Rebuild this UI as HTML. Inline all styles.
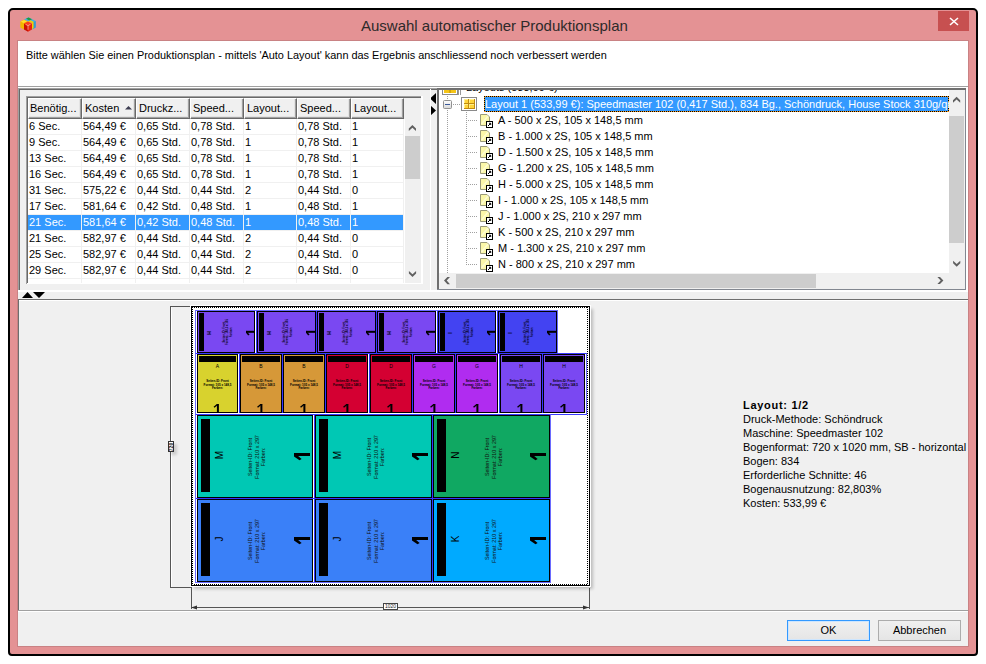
<!DOCTYPE html><html><head><meta charset="utf-8"><style>
*{box-sizing:border-box;margin:0;padding:0}
html,body{width:986px;height:664px;overflow:hidden;background:#fff;position:relative;font-family:"Liberation Sans",sans-serif}
.a{position:absolute}
.t{position:absolute;white-space:nowrap;font-size:11px;line-height:16px;color:#000}
.hc{position:absolute;top:98px;height:21px;background:#F0F0F0;border-top:1px solid #fff;border-left:1px solid #fff;border-right:1px solid #696969;border-bottom:1px solid #696969;box-shadow:inset -1px -1px 0 #A0A0A0,inset -2px -2px 0 #E3E3E3;font-size:11px;line-height:18px;padding-left:2px;white-space:nowrap;overflow:hidden;color:#000}
.chev{position:absolute}
</style></head><body>

<div class="a" style="left:8px;top:8px;width:970px;height:648px;background:#E49294;border:2px solid #000;border-radius:5px 5px 4px 4px"></div>
<div class="a" style="left:17px;top:40px;width:952px;height:607px;border:1px solid #C98284"></div>
<div class="t" style="left:361px;top:16px;font-size:15px;line-height:20px;color:#2E2A2A">Auswahl automatischer Produktionsplan</div>
<div class="a" style="left:938px;top:11px;width:31px;height:20px;background:#C75050"></div>
<svg class="a" style="left:938px;top:11px" width="31" height="20"><path d="M12 7 L20 14 M20 7 L12 14" stroke="#fff" stroke-width="1.6"/></svg>
<svg class="a" style="left:20px;top:17px" width="16" height="15" viewBox="0 0 16 15">
<path d="M0.3 4.5L4 2.5L8 4.5L8 8L4 12.5L0.3 10.5Z" fill="#F2B800"/>
<path d="M0.8 4.6L4 2.9L7 4.4L3.6 6Z" fill="#FFE030"/>
<path d="M4 2.5L8.5 0.3L15.7 4L15.7 10.5L12 12.5L12 6Z" fill="#48AEE0"/>
<path d="M15.7 4L15.7 10.5L13 12L13 5.5Z" fill="#3A98D0"/>
<path d="M6 1.8L8.5 0.5L12 2.3L9.5 3.6Z" fill="#1E9A3C"/>
<path d="M8 4.5L10.5 3.2L13.5 4.8L13.5 11.2L12 12L12 6Z" fill="#F8CC00"/>
<path d="M4 6.5L8 8.5L8 14.7L4 12.5Z" fill="#CC1000"/>
<path d="M8 8.5L12 6.5L12 12.5L8 14.7Z" fill="#E82410"/>
<path d="M4 6.5L8 4.6L12 6.5L8 8.5Z" fill="#FF3A1A"/>
<path d="M8 8.6V12.8M8 8.6L5.6 7.4M8 8.6L10.4 7.4" stroke="#FFC0A8" stroke-width="0.7" fill="none"/>
</svg>
<div class="a" style="left:18px;top:41px;width:950px;height:605px;background:#F0F0F0"></div>
<div class="a" style="left:18px;top:41px;width:950px;height:45px;background:#fff"></div>
<div class="t" style="left:26px;top:49px;font-size:11px;line-height:12px;transform:scaleX(0.9915);transform-origin:0 0">Bitte wählen Sie einen Produktionsplan - mittels 'Auto Layout' kann das Ergebnis anschliessend noch verbessert werden</div>
<div class="a" style="left:18px;top:86px;width:950px;height:1px;background:#A0A0A0"></div>
<div class="a" style="left:18px;top:87px;width:950px;height:1px;background:#fff"></div>
<div class="a" style="left:18px;top:88px;width:949px;height:1px;background:#A0A0A0"></div>
<div class="a" style="left:18px;top:89px;width:948px;height:1px;background:#696969"></div>
<div class="a" style="left:18px;top:88px;width:1px;height:203px;background:#A0A0A0"></div>
<div class="a" style="left:19px;top:89px;width:1px;height:201px;background:#696969"></div>
<div class="a" style="left:18px;top:290px;width:950px;height:2px;background:#fff"></div>
<div class="a" style="left:966px;top:88px;width:2px;height:204px;background:#fff"></div>
<div class="a" style="left:26px;top:96px;width:397px;height:188px;background:#fff"></div>
<div class="a" style="left:26px;top:96px;width:397px;height:1px;background:#A0A0A0"></div>
<div class="a" style="left:26px;top:97px;width:396px;height:1px;background:#696969"></div>
<div class="a" style="left:26px;top:96px;width:1px;height:188px;background:#A0A0A0"></div>
<div class="a" style="left:27px;top:97px;width:1px;height:186px;background:#696969"></div>
<div class="a" style="left:28px;top:98px;width:393px;height:21px;background:#F0F0F0"></div>
<div class="hc" style="left:28px;width:54px;padding-left:1px">Benötig...</div>
<div class="hc" style="left:82px;width:54px;">Kosten</div>
<div class="hc" style="left:136px;width:54px;">Druckz...</div>
<div class="hc" style="left:190px;width:54px;">Speed...</div>
<div class="hc" style="left:244px;width:53px;">Layout...</div>
<div class="hc" style="left:297px;width:54px;">Speed...</div>
<div class="hc" style="left:351px;width:53px;">Layout...</div>
<svg class="a" style="left:124px;top:105px" width="9" height="6"><path d="M1 4.5 L4.5 1 L8 4.5Z" fill="#3C3C50"/></svg>
<div class="a" style="left:28px;top:119px;width:376px;height:164px;overflow:hidden">
<div class="a" style="left:0px;top:15px;width:376px;height:1px;background:#F0F0F0"></div>
<div class="t" style="left:1px;top:-1px;color:#000">6 Sec.</div>
<div class="t" style="left:55px;top:-1px;color:#000">564,49 €</div>
<div class="t" style="left:109px;top:-1px;color:#000">0,65 Std.</div>
<div class="t" style="left:163px;top:-1px;color:#000">0,78 Std.</div>
<div class="t" style="left:217px;top:-1px;color:#000">1</div>
<div class="t" style="left:270px;top:-1px;color:#000">0,78 Std.</div>
<div class="t" style="left:324px;top:-1px;color:#000">1</div>
<div class="a" style="left:0px;top:31px;width:376px;height:1px;background:#F0F0F0"></div>
<div class="t" style="left:1px;top:15px;color:#000">9 Sec.</div>
<div class="t" style="left:55px;top:15px;color:#000">564,49 €</div>
<div class="t" style="left:109px;top:15px;color:#000">0,65 Std.</div>
<div class="t" style="left:163px;top:15px;color:#000">0,78 Std.</div>
<div class="t" style="left:217px;top:15px;color:#000">1</div>
<div class="t" style="left:270px;top:15px;color:#000">0,78 Std.</div>
<div class="t" style="left:324px;top:15px;color:#000">1</div>
<div class="a" style="left:0px;top:47px;width:376px;height:1px;background:#F0F0F0"></div>
<div class="t" style="left:1px;top:31px;color:#000">13 Sec.</div>
<div class="t" style="left:55px;top:31px;color:#000">564,49 €</div>
<div class="t" style="left:109px;top:31px;color:#000">0,65 Std.</div>
<div class="t" style="left:163px;top:31px;color:#000">0,78 Std.</div>
<div class="t" style="left:217px;top:31px;color:#000">1</div>
<div class="t" style="left:270px;top:31px;color:#000">0,78 Std.</div>
<div class="t" style="left:324px;top:31px;color:#000">1</div>
<div class="a" style="left:0px;top:63px;width:376px;height:1px;background:#F0F0F0"></div>
<div class="t" style="left:1px;top:47px;color:#000">16 Sec.</div>
<div class="t" style="left:55px;top:47px;color:#000">564,49 €</div>
<div class="t" style="left:109px;top:47px;color:#000">0,65 Std.</div>
<div class="t" style="left:163px;top:47px;color:#000">0,78 Std.</div>
<div class="t" style="left:217px;top:47px;color:#000">1</div>
<div class="t" style="left:270px;top:47px;color:#000">0,78 Std.</div>
<div class="t" style="left:324px;top:47px;color:#000">1</div>
<div class="a" style="left:0px;top:79px;width:376px;height:1px;background:#F0F0F0"></div>
<div class="t" style="left:1px;top:63px;color:#000">31 Sec.</div>
<div class="t" style="left:55px;top:63px;color:#000">575,22 €</div>
<div class="t" style="left:109px;top:63px;color:#000">0,44 Std.</div>
<div class="t" style="left:163px;top:63px;color:#000">0,44 Std.</div>
<div class="t" style="left:217px;top:63px;color:#000">2</div>
<div class="t" style="left:270px;top:63px;color:#000">0,44 Std.</div>
<div class="t" style="left:324px;top:63px;color:#000">0</div>
<div class="a" style="left:0px;top:95px;width:376px;height:1px;background:#F0F0F0"></div>
<div class="t" style="left:1px;top:79px;color:#000">17 Sec.</div>
<div class="t" style="left:55px;top:79px;color:#000">581,64 €</div>
<div class="t" style="left:109px;top:79px;color:#000">0,42 Std.</div>
<div class="t" style="left:163px;top:79px;color:#000">0,48 Std.</div>
<div class="t" style="left:217px;top:79px;color:#000">1</div>
<div class="t" style="left:270px;top:79px;color:#000">0,48 Std.</div>
<div class="t" style="left:324px;top:79px;color:#000">1</div>
<div class="a" style="left:0px;top:96px;width:376px;height:15px;background:#3399FF"></div>
<div class="a" style="left:0px;top:111px;width:376px;height:1px;background:#F0F0F0"></div>
<div class="t" style="left:1px;top:95px;color:#fff">21 Sec.</div>
<div class="t" style="left:55px;top:95px;color:#fff">581,64 €</div>
<div class="t" style="left:109px;top:95px;color:#fff">0,42 Std.</div>
<div class="t" style="left:163px;top:95px;color:#fff">0,48 Std.</div>
<div class="t" style="left:217px;top:95px;color:#fff">1</div>
<div class="t" style="left:270px;top:95px;color:#fff">0,48 Std.</div>
<div class="t" style="left:324px;top:95px;color:#fff">1</div>
<div class="a" style="left:0px;top:127px;width:376px;height:1px;background:#F0F0F0"></div>
<div class="t" style="left:1px;top:111px;color:#000">21 Sec.</div>
<div class="t" style="left:55px;top:111px;color:#000">582,97 €</div>
<div class="t" style="left:109px;top:111px;color:#000">0,44 Std.</div>
<div class="t" style="left:163px;top:111px;color:#000">0,44 Std.</div>
<div class="t" style="left:217px;top:111px;color:#000">2</div>
<div class="t" style="left:270px;top:111px;color:#000">0,44 Std.</div>
<div class="t" style="left:324px;top:111px;color:#000">0</div>
<div class="a" style="left:0px;top:143px;width:376px;height:1px;background:#F0F0F0"></div>
<div class="t" style="left:1px;top:127px;color:#000">25 Sec.</div>
<div class="t" style="left:55px;top:127px;color:#000">582,97 €</div>
<div class="t" style="left:109px;top:127px;color:#000">0,44 Std.</div>
<div class="t" style="left:163px;top:127px;color:#000">0,44 Std.</div>
<div class="t" style="left:217px;top:127px;color:#000">2</div>
<div class="t" style="left:270px;top:127px;color:#000">0,44 Std.</div>
<div class="t" style="left:324px;top:127px;color:#000">0</div>
<div class="a" style="left:0px;top:159px;width:376px;height:1px;background:#F0F0F0"></div>
<div class="t" style="left:1px;top:143px;color:#000">29 Sec.</div>
<div class="t" style="left:55px;top:143px;color:#000">582,97 €</div>
<div class="t" style="left:109px;top:143px;color:#000">0,44 Std.</div>
<div class="t" style="left:163px;top:143px;color:#000">0,44 Std.</div>
<div class="t" style="left:217px;top:143px;color:#000">2</div>
<div class="t" style="left:270px;top:143px;color:#000">0,44 Std.</div>
<div class="t" style="left:324px;top:143px;color:#000">0</div>
<div class="a" style="left:53px;top:0px;width:1px;height:164px;background:#F0F0F0"></div>
<div class="a" style="left:107px;top:0px;width:1px;height:164px;background:#F0F0F0"></div>
<div class="a" style="left:161px;top:0px;width:1px;height:164px;background:#F0F0F0"></div>
<div class="a" style="left:215px;top:0px;width:1px;height:164px;background:#F0F0F0"></div>
<div class="a" style="left:268px;top:0px;width:1px;height:164px;background:#F0F0F0"></div>
<div class="a" style="left:322px;top:0px;width:1px;height:164px;background:#F0F0F0"></div>
<div class="a" style="left:375px;top:0px;width:1px;height:164px;background:#F0F0F0"></div>
</div>
<div class="a" style="left:405px;top:119px;width:16px;height:164px;background:#F0F0F0"></div>
<div class="a" style="left:405px;top:136px;width:15px;height:43px;background:#CDCDCD"></div>
<svg class="a" style="left:0;top:0" width="986" height="664"><path d="M408.80 128.40 L412.40 125.00 L416.00 128.40 L416.00 131.00 L412.40 127.70 L408.80 131.00Z M408.90 273.60 L412.50 277.00 L416.10 273.60 L416.10 271.00 L412.50 274.30 L408.90 271.00Z" fill="#606060"/></svg>
<div style="display:none"></div>
<div class="a" style="left:421px;top:96px;width:2px;height:188px;background:#fff"></div>
<div class="a" style="left:28px;top:283px;width:395px;height:1px;background:#fff"></div>
<svg class="a" style="left:0;top:0" width="986" height="664"><path d="M436 93 L430 98.5 L436 104Z M430 105 L436 110.5 L430 116Z M22 298 L27.5 292 L33 298Z M33 292 L45 292 L39 298Z" fill="#000"/></svg>
<div class="a" style="left:430px;top:89px;width:1px;height:201px;background:#fff"></div>
<div class="a" style="left:437px;top:88px;width:529px;height:202px;background:#fff"></div>
<div class="a" style="left:437px;top:88px;width:2px;height:202px;background:#6F6F6F"></div>
<div class="a" style="left:965px;top:88px;width:1px;height:202px;background:#828790"></div>
<div class="a" style="left:437px;top:289px;width:529px;height:1px;background:#828790"></div>
<div class="a" style="left:949px;top:90px;width:16px;height:183px;background:#F0F0F0"></div>
<div class="a" style="left:949px;top:116px;width:15px;height:127px;background:#CDCDCD"></div>
<div class="a" style="left:439px;top:273px;width:526px;height:16px;background:#F0F0F0"></div>
<div class="a" style="left:456px;top:274px;width:360px;height:14px;background:#CDCDCD"></div>
<svg class="a" style="left:0;top:0" width="986" height="664"><path d="M953.00 100.20 L956.60 96.80 L960.20 100.20 L960.20 102.80 L956.60 99.50 L953.00 102.80Z M953.10 263.30 L956.70 266.70 L960.30 263.30 L960.30 260.70 L956.70 264.00 L953.10 260.70Z M447.40 277.00 L444.00 280.60 L447.40 284.20 L450.00 284.20 L446.70 280.60 L450.00 277.00Z M940.00 276.90 L943.40 280.50 L940.00 284.10 L937.40 284.10 L940.70 280.50 L937.40 276.90Z" fill="#606060"/></svg>
<div class="a" style="left:437px;top:88px;width:529px;height:2px;background:#6F6F6F"></div>
<div class="a" style="left:439px;top:90px;width:510px;height:183px;overflow:hidden;background:#fff">
<svg class="a" style="left:3px;top:-10px" width="20" height="16"><rect x="0.5" y="1.5" width="15" height="13" fill="#fff" stroke="#8a8a8a"/><rect x="2" y="3" width="12" height="10" fill="#F5C518"/><path d="M2 8H14M8 3V13" stroke="#B88A00"/><path d="M16.5 9V15M18.5 9V15" stroke="#999"/></svg>
<div class="t" style="left:27px;top:-11px;">Layouts (533,99 €)</div>
<svg class="a" style="left:0;top:0" width="510" height="183" fill="#A0A0A0"><rect x="8" y="6" width="1" height="1"/><rect x="8" y="8" width="1" height="1"/><rect x="8" y="20" width="1" height="1"/><rect x="8" y="22" width="1" height="1"/><rect x="8" y="24" width="1" height="1"/><rect x="8" y="26" width="1" height="1"/><rect x="8" y="28" width="1" height="1"/><rect x="8" y="30" width="1" height="1"/><rect x="8" y="32" width="1" height="1"/><rect x="8" y="34" width="1" height="1"/><rect x="8" y="36" width="1" height="1"/><rect x="8" y="38" width="1" height="1"/><rect x="8" y="40" width="1" height="1"/><rect x="8" y="42" width="1" height="1"/><rect x="8" y="44" width="1" height="1"/><rect x="8" y="46" width="1" height="1"/><rect x="8" y="48" width="1" height="1"/><rect x="8" y="50" width="1" height="1"/><rect x="8" y="52" width="1" height="1"/><rect x="8" y="54" width="1" height="1"/><rect x="8" y="56" width="1" height="1"/><rect x="8" y="58" width="1" height="1"/><rect x="8" y="60" width="1" height="1"/><rect x="8" y="62" width="1" height="1"/><rect x="8" y="64" width="1" height="1"/><rect x="8" y="66" width="1" height="1"/><rect x="8" y="68" width="1" height="1"/><rect x="8" y="70" width="1" height="1"/><rect x="8" y="72" width="1" height="1"/><rect x="8" y="74" width="1" height="1"/><rect x="8" y="76" width="1" height="1"/><rect x="8" y="78" width="1" height="1"/><rect x="8" y="80" width="1" height="1"/><rect x="8" y="82" width="1" height="1"/><rect x="8" y="84" width="1" height="1"/><rect x="8" y="86" width="1" height="1"/><rect x="8" y="88" width="1" height="1"/><rect x="8" y="90" width="1" height="1"/><rect x="8" y="92" width="1" height="1"/><rect x="8" y="94" width="1" height="1"/><rect x="8" y="96" width="1" height="1"/><rect x="8" y="98" width="1" height="1"/><rect x="8" y="100" width="1" height="1"/><rect x="8" y="102" width="1" height="1"/><rect x="8" y="104" width="1" height="1"/><rect x="8" y="106" width="1" height="1"/><rect x="8" y="108" width="1" height="1"/><rect x="8" y="110" width="1" height="1"/><rect x="8" y="112" width="1" height="1"/><rect x="8" y="114" width="1" height="1"/><rect x="8" y="116" width="1" height="1"/><rect x="8" y="118" width="1" height="1"/><rect x="8" y="120" width="1" height="1"/><rect x="8" y="122" width="1" height="1"/><rect x="8" y="124" width="1" height="1"/><rect x="8" y="126" width="1" height="1"/><rect x="8" y="128" width="1" height="1"/><rect x="8" y="130" width="1" height="1"/><rect x="8" y="132" width="1" height="1"/><rect x="8" y="134" width="1" height="1"/><rect x="8" y="136" width="1" height="1"/><rect x="8" y="138" width="1" height="1"/><rect x="8" y="140" width="1" height="1"/><rect x="8" y="142" width="1" height="1"/><rect x="8" y="144" width="1" height="1"/><rect x="8" y="146" width="1" height="1"/><rect x="8" y="148" width="1" height="1"/><rect x="8" y="150" width="1" height="1"/><rect x="8" y="152" width="1" height="1"/><rect x="8" y="154" width="1" height="1"/><rect x="8" y="156" width="1" height="1"/><rect x="8" y="158" width="1" height="1"/><rect x="8" y="160" width="1" height="1"/><rect x="8" y="162" width="1" height="1"/><rect x="8" y="164" width="1" height="1"/><rect x="8" y="166" width="1" height="1"/><rect x="8" y="168" width="1" height="1"/><rect x="8" y="170" width="1" height="1"/><rect x="8" y="172" width="1" height="1"/><rect x="8" y="174" width="1" height="1"/><rect x="8" y="176" width="1" height="1"/><rect x="8" y="178" width="1" height="1"/><rect x="8" y="180" width="1" height="1"/><rect x="8" y="182" width="1" height="1"/><rect x="14" y="14" width="1" height="1"/><rect x="16" y="14" width="1" height="1"/><rect x="18" y="14" width="1" height="1"/><rect x="20" y="14" width="1" height="1"/><rect x="27" y="22" width="1" height="1"/><rect x="27" y="24" width="1" height="1"/><rect x="27" y="26" width="1" height="1"/><rect x="27" y="28" width="1" height="1"/><rect x="27" y="30" width="1" height="1"/><rect x="27" y="32" width="1" height="1"/><rect x="27" y="34" width="1" height="1"/><rect x="27" y="36" width="1" height="1"/><rect x="27" y="38" width="1" height="1"/><rect x="27" y="40" width="1" height="1"/><rect x="27" y="42" width="1" height="1"/><rect x="27" y="44" width="1" height="1"/><rect x="27" y="46" width="1" height="1"/><rect x="27" y="48" width="1" height="1"/><rect x="27" y="50" width="1" height="1"/><rect x="27" y="52" width="1" height="1"/><rect x="27" y="54" width="1" height="1"/><rect x="27" y="56" width="1" height="1"/><rect x="27" y="58" width="1" height="1"/><rect x="27" y="60" width="1" height="1"/><rect x="27" y="62" width="1" height="1"/><rect x="27" y="64" width="1" height="1"/><rect x="27" y="66" width="1" height="1"/><rect x="27" y="68" width="1" height="1"/><rect x="27" y="70" width="1" height="1"/><rect x="27" y="72" width="1" height="1"/><rect x="27" y="74" width="1" height="1"/><rect x="27" y="76" width="1" height="1"/><rect x="27" y="78" width="1" height="1"/><rect x="27" y="80" width="1" height="1"/><rect x="27" y="82" width="1" height="1"/><rect x="27" y="84" width="1" height="1"/><rect x="27" y="86" width="1" height="1"/><rect x="27" y="88" width="1" height="1"/><rect x="27" y="90" width="1" height="1"/><rect x="27" y="92" width="1" height="1"/><rect x="27" y="94" width="1" height="1"/><rect x="27" y="96" width="1" height="1"/><rect x="27" y="98" width="1" height="1"/><rect x="27" y="100" width="1" height="1"/><rect x="27" y="102" width="1" height="1"/><rect x="27" y="104" width="1" height="1"/><rect x="27" y="106" width="1" height="1"/><rect x="27" y="108" width="1" height="1"/><rect x="27" y="110" width="1" height="1"/><rect x="27" y="112" width="1" height="1"/><rect x="27" y="114" width="1" height="1"/><rect x="27" y="116" width="1" height="1"/><rect x="27" y="118" width="1" height="1"/><rect x="27" y="120" width="1" height="1"/><rect x="27" y="122" width="1" height="1"/><rect x="27" y="124" width="1" height="1"/><rect x="27" y="126" width="1" height="1"/><rect x="27" y="128" width="1" height="1"/><rect x="27" y="130" width="1" height="1"/><rect x="27" y="132" width="1" height="1"/><rect x="27" y="134" width="1" height="1"/><rect x="27" y="136" width="1" height="1"/><rect x="27" y="138" width="1" height="1"/><rect x="27" y="140" width="1" height="1"/><rect x="27" y="142" width="1" height="1"/><rect x="27" y="144" width="1" height="1"/><rect x="27" y="146" width="1" height="1"/><rect x="27" y="148" width="1" height="1"/><rect x="27" y="150" width="1" height="1"/><rect x="27" y="152" width="1" height="1"/><rect x="27" y="154" width="1" height="1"/><rect x="27" y="156" width="1" height="1"/><rect x="27" y="158" width="1" height="1"/><rect x="27" y="160" width="1" height="1"/><rect x="27" y="162" width="1" height="1"/><rect x="27" y="164" width="1" height="1"/><rect x="27" y="166" width="1" height="1"/><rect x="27" y="168" width="1" height="1"/><rect x="27" y="170" width="1" height="1"/><rect x="27" y="172" width="1" height="1"/><rect x="27" y="174" width="1" height="1"/><rect x="29" y="30" width="1" height="1"/><rect x="31" y="30" width="1" height="1"/><rect x="33" y="30" width="1" height="1"/><rect x="35" y="30" width="1" height="1"/><rect x="37" y="30" width="1" height="1"/><rect x="29" y="46" width="1" height="1"/><rect x="31" y="46" width="1" height="1"/><rect x="33" y="46" width="1" height="1"/><rect x="35" y="46" width="1" height="1"/><rect x="37" y="46" width="1" height="1"/><rect x="29" y="62" width="1" height="1"/><rect x="31" y="62" width="1" height="1"/><rect x="33" y="62" width="1" height="1"/><rect x="35" y="62" width="1" height="1"/><rect x="37" y="62" width="1" height="1"/><rect x="29" y="78" width="1" height="1"/><rect x="31" y="78" width="1" height="1"/><rect x="33" y="78" width="1" height="1"/><rect x="35" y="78" width="1" height="1"/><rect x="37" y="78" width="1" height="1"/><rect x="29" y="94" width="1" height="1"/><rect x="31" y="94" width="1" height="1"/><rect x="33" y="94" width="1" height="1"/><rect x="35" y="94" width="1" height="1"/><rect x="37" y="94" width="1" height="1"/><rect x="29" y="110" width="1" height="1"/><rect x="31" y="110" width="1" height="1"/><rect x="33" y="110" width="1" height="1"/><rect x="35" y="110" width="1" height="1"/><rect x="37" y="110" width="1" height="1"/><rect x="29" y="126" width="1" height="1"/><rect x="31" y="126" width="1" height="1"/><rect x="33" y="126" width="1" height="1"/><rect x="35" y="126" width="1" height="1"/><rect x="37" y="126" width="1" height="1"/><rect x="29" y="142" width="1" height="1"/><rect x="31" y="142" width="1" height="1"/><rect x="33" y="142" width="1" height="1"/><rect x="35" y="142" width="1" height="1"/><rect x="37" y="142" width="1" height="1"/><rect x="29" y="158" width="1" height="1"/><rect x="31" y="158" width="1" height="1"/><rect x="33" y="158" width="1" height="1"/><rect x="35" y="158" width="1" height="1"/><rect x="37" y="158" width="1" height="1"/><rect x="29" y="174" width="1" height="1"/><rect x="31" y="174" width="1" height="1"/><rect x="33" y="174" width="1" height="1"/><rect x="35" y="174" width="1" height="1"/><rect x="37" y="174" width="1" height="1"/></svg>
<svg class="a" style="left:4px;top:10px" width="9" height="9"><defs><linearGradient id="eg" x1="0" y1="0" x2="0" y2="1"><stop offset="0" stop-color="#fff"/><stop offset="1" stop-color="#D8D8D8"/></linearGradient></defs><rect x="0.5" y="0.5" width="8" height="8" rx="1" fill="url(#eg)" stroke="#919191"/><path d="M2 4.5H7" stroke="#3C5A9A"/></svg>
<svg class="a" style="left:22px;top:7px" width="16" height="14"><rect x="0.5" y="0.5" width="15" height="13" fill="#fff" stroke="#8a8a8a"/><rect x="3" y="2" width="11" height="10" fill="#FFD43A"/><path d="M3 2.5H13M3 7.5H13M3.5 2V12M8.5 2V12" stroke="#FFF08A"/><path d="M3 6.5H14M3 11.5H14M7.5 2V12M13.5 2V12" stroke="#C08A10"/></svg>
<div class="a" style="left:45px;top:6px;width:465px;height:16px;background:#3399FF"></div>
<div class="a" style="left:45px;top:6px;width:465px;height:1px;background:repeating-linear-gradient(90deg,#000 0 1px,#F39A1E 1px 2px)"></div>
<div class="a" style="left:45px;top:21px;width:465px;height:1px;background:repeating-linear-gradient(90deg,#000 0 1px,#F39A1E 1px 2px)"></div>
<div class="a" style="left:45px;top:6px;width:1px;height:16px;background:repeating-linear-gradient(180deg,#000 0 1px,#F39A1E 1px 2px)"></div>
<div class="a" style="left:509px;top:6px;width:1px;height:16px;background:repeating-linear-gradient(180deg,#000 0 1px,#F39A1E 1px 2px)"></div>
<div class="t" style="left:46px;top:6px;color:#fff">Layout 1 (533,99 €): Speedmaster 102 (0,417 Std.), 834 Bg., Schöndruck, House Stock 310g/qm</div>
<svg class="a" style="left:41px;top:24px" width="14" height="14"><path d="M0.5 0.5H7L9.5 3V11.5H0.5Z" fill="#FBF7A8" stroke="#9A9A7A"/><path d="M1.5 10L8 2" stroke="#FFFFE0" stroke-width="1.5" opacity=".8"/><rect x="6.5" y="7.5" width="6" height="6" fill="#fff" stroke="#000"/><path d="M8 12L10.5 9.5M9 9.3H10.7V11" stroke="#000" fill="none"/></svg>
<div class="t" style="left:59px;top:22px;">A - 500 x 2S, 105 x 148,5 mm</div>
<svg class="a" style="left:41px;top:40px" width="14" height="14"><path d="M0.5 0.5H7L9.5 3V11.5H0.5Z" fill="#FBF7A8" stroke="#9A9A7A"/><path d="M1.5 10L8 2" stroke="#FFFFE0" stroke-width="1.5" opacity=".8"/><rect x="6.5" y="7.5" width="6" height="6" fill="#fff" stroke="#000"/><path d="M8 12L10.5 9.5M9 9.3H10.7V11" stroke="#000" fill="none"/></svg>
<div class="t" style="left:59px;top:38px;">B - 1.000 x 2S, 105 x 148,5 mm</div>
<svg class="a" style="left:41px;top:56px" width="14" height="14"><path d="M0.5 0.5H7L9.5 3V11.5H0.5Z" fill="#FBF7A8" stroke="#9A9A7A"/><path d="M1.5 10L8 2" stroke="#FFFFE0" stroke-width="1.5" opacity=".8"/><rect x="6.5" y="7.5" width="6" height="6" fill="#fff" stroke="#000"/><path d="M8 12L10.5 9.5M9 9.3H10.7V11" stroke="#000" fill="none"/></svg>
<div class="t" style="left:59px;top:54px;">D - 1.500 x 2S, 105 x 148,5 mm</div>
<svg class="a" style="left:41px;top:72px" width="14" height="14"><path d="M0.5 0.5H7L9.5 3V11.5H0.5Z" fill="#FBF7A8" stroke="#9A9A7A"/><path d="M1.5 10L8 2" stroke="#FFFFE0" stroke-width="1.5" opacity=".8"/><rect x="6.5" y="7.5" width="6" height="6" fill="#fff" stroke="#000"/><path d="M8 12L10.5 9.5M9 9.3H10.7V11" stroke="#000" fill="none"/></svg>
<div class="t" style="left:59px;top:70px;">G - 1.200 x 2S, 105 x 148,5 mm</div>
<svg class="a" style="left:41px;top:88px" width="14" height="14"><path d="M0.5 0.5H7L9.5 3V11.5H0.5Z" fill="#FBF7A8" stroke="#9A9A7A"/><path d="M1.5 10L8 2" stroke="#FFFFE0" stroke-width="1.5" opacity=".8"/><rect x="6.5" y="7.5" width="6" height="6" fill="#fff" stroke="#000"/><path d="M8 12L10.5 9.5M9 9.3H10.7V11" stroke="#000" fill="none"/></svg>
<div class="t" style="left:59px;top:86px;">H - 5.000 x 2S, 105 x 148,5 mm</div>
<svg class="a" style="left:41px;top:104px" width="14" height="14"><path d="M0.5 0.5H7L9.5 3V11.5H0.5Z" fill="#FBF7A8" stroke="#9A9A7A"/><path d="M1.5 10L8 2" stroke="#FFFFE0" stroke-width="1.5" opacity=".8"/><rect x="6.5" y="7.5" width="6" height="6" fill="#fff" stroke="#000"/><path d="M8 12L10.5 9.5M9 9.3H10.7V11" stroke="#000" fill="none"/></svg>
<div class="t" style="left:59px;top:102px;">I - 1.000 x 2S, 105 x 148,5 mm</div>
<svg class="a" style="left:41px;top:120px" width="14" height="14"><path d="M0.5 0.5H7L9.5 3V11.5H0.5Z" fill="#FBF7A8" stroke="#9A9A7A"/><path d="M1.5 10L8 2" stroke="#FFFFE0" stroke-width="1.5" opacity=".8"/><rect x="6.5" y="7.5" width="6" height="6" fill="#fff" stroke="#000"/><path d="M8 12L10.5 9.5M9 9.3H10.7V11" stroke="#000" fill="none"/></svg>
<div class="t" style="left:59px;top:118px;">J - 1.000 x 2S, 210 x 297 mm</div>
<svg class="a" style="left:41px;top:136px" width="14" height="14"><path d="M0.5 0.5H7L9.5 3V11.5H0.5Z" fill="#FBF7A8" stroke="#9A9A7A"/><path d="M1.5 10L8 2" stroke="#FFFFE0" stroke-width="1.5" opacity=".8"/><rect x="6.5" y="7.5" width="6" height="6" fill="#fff" stroke="#000"/><path d="M8 12L10.5 9.5M9 9.3H10.7V11" stroke="#000" fill="none"/></svg>
<div class="t" style="left:59px;top:134px;">K - 500 x 2S, 210 x 297 mm</div>
<svg class="a" style="left:41px;top:152px" width="14" height="14"><path d="M0.5 0.5H7L9.5 3V11.5H0.5Z" fill="#FBF7A8" stroke="#9A9A7A"/><path d="M1.5 10L8 2" stroke="#FFFFE0" stroke-width="1.5" opacity=".8"/><rect x="6.5" y="7.5" width="6" height="6" fill="#fff" stroke="#000"/><path d="M8 12L10.5 9.5M9 9.3H10.7V11" stroke="#000" fill="none"/></svg>
<div class="t" style="left:59px;top:150px;">M - 1.300 x 2S, 210 x 297 mm</div>
<svg class="a" style="left:41px;top:168px" width="14" height="14"><path d="M0.5 0.5H7L9.5 3V11.5H0.5Z" fill="#FBF7A8" stroke="#9A9A7A"/><path d="M1.5 10L8 2" stroke="#FFFFE0" stroke-width="1.5" opacity=".8"/><rect x="6.5" y="7.5" width="6" height="6" fill="#fff" stroke="#000"/><path d="M8 12L10.5 9.5M9 9.3H10.7V11" stroke="#000" fill="none"/></svg>
<div class="t" style="left:59px;top:166px;">N - 800 x 2S, 210 x 297 mm</div>
</div>
<div class="a" style="left:18px;top:299px;width:950px;height:1px;background:#6F6F6F"></div>
<div class="a" style="left:18px;top:299px;width:1px;height:311px;background:#6F6F6F"></div>
<div class="a" style="left:19px;top:300px;width:949px;height:1px;background:#fff"></div>
<div class="a" style="left:18px;top:610px;width:950px;height:1px;background:#A0A0A0"></div>
<div class="a" style="left:18px;top:611px;width:950px;height:1px;background:#fff"></div>
<div class="t" style="left:743px;top:398px;line-height:14px"><b style="letter-spacing:0.7px">Layout: 1/2</b></div>
<div class="t" style="left:743px;top:412px;line-height:14px">Druck-Methode: Schöndruck</div>
<div class="t" style="left:743px;top:426px;line-height:14px">Maschine: Speedmaster 102</div>
<div class="t" style="left:743px;top:440px;line-height:14px">Bogenformat: 720 x 1020 mm, SB - horizontal</div>
<div class="t" style="left:743px;top:454px;line-height:14px">Bogen: 834</div>
<div class="t" style="left:743px;top:468px;line-height:14px">Erforderliche Schnitte: 46</div>
<div class="t" style="left:743px;top:482px;line-height:14px">Bogenausnutzung: 82,803%</div>
<div class="t" style="left:743px;top:496px;line-height:14px">Kosten: 533,99 €</div>
<div class="a" style="left:787px;top:620px;width:83px;height:21px;border:1px solid #3399FF;box-shadow:inset 0 0 0 1px #CDE6FF;background:linear-gradient(#F0F0F0,#E5E5E5);font-size:11px;line-height:19px;text-align:center;color:#000">OK</div>
<div class="a" style="left:878px;top:620px;width:83px;height:21px;border:1px solid #ACACAC;background:linear-gradient(#F0F0F0,#E5E5E5);font-size:11px;line-height:19px;text-align:center;color:#000">Abbrechen</div>
<div class="a" style="left:170px;top:306px;width:1px;height:282px;background:#555"></div>
<div class="a" style="left:170px;top:306px;width:20px;height:1px;background:#555"></div>
<div class="a" style="left:171px;top:307px;width:1px;height:280px;background:#fff"></div>
<div class="a" style="left:170px;top:587px;width:21px;height:1px;background:#555"></div>
<div class="a" style="left:168px;top:441px;width:6px;height:11px;background:#fff;border:1px solid #333;box-shadow:3px 3px 3px rgba(0,0,0,.15)"></div>
<div class="a" style="left:171px;top:446.5px;width:0;height:0"><div style="position:absolute;left:-8px;top:-3px;width:16px;height:6px;font-size:5px;line-height:6px;color:#111;font-weight:bold;text-align:center;transform:rotate(-90deg)">720</div></div>
<div class="a" style="left:191px;top:607px;width:398px;height:1px;background:#555"></div>
<div class="a" style="left:191px;top:585px;width:1px;height:24px;background:#555"></div>
<div class="a" style="left:589px;top:588px;width:1px;height:21px;background:#555"></div>
<div class="a" style="left:383px;top:603px;width:15px;height:7px;background:#fff;border:1px solid #444;font-size:5px;line-height:5px;text-align:center;color:#222">1020</div>
<svg class="a" style="left:580px;top:604px" width="10" height="7"><path d="M9 3.5L3 1.5V5.5Z" fill="#333"/></svg>
<svg class="a" style="left:191px;top:604px" width="10" height="7"><path d="M0 3.5L6 1.5V5.5Z" fill="#333"/></svg>
<div class="a" style="left:191px;top:306px;width:399px;height:280px;background:#fff;border:1px solid #000;outline:1px solid #fff;box-shadow:3px 3px 3px rgba(0,0,0,.22)"></div>
<div class="a" style="left:192px;top:307px;width:396px;height:1px;background:repeating-linear-gradient(90deg,#000 0 1px,#fff 1px 2px)"></div>
<div class="a" style="left:192px;top:584px;width:396px;height:1px;background:repeating-linear-gradient(90deg,#000 0 1px,#fff 1px 2px)"></div>
<div class="a" style="left:192px;top:307px;width:1px;height:278px;background:repeating-linear-gradient(180deg,#000 0 1px,#fff 1px 2px)"></div>
<div class="a" style="left:587px;top:307px;width:1px;height:278px;background:repeating-linear-gradient(180deg,#000 0 1px,#fff 1px 2px)"></div>
<div class="a" style="left:195px;top:310px;width:363px;height:44px;border:1px solid #6A6AFF"></div>
<div class="a" style="left:195px;top:353px;width:392px;height:62px;border:1px solid #3A3AFF;border-left-color:#6A6AFF;border-right-color:#6A6AFF"></div>
<div class="a" style="left:195px;top:414px;width:356px;height:169px;border:1px solid #3A3AFF;border-left-color:#6A6AFF;border-right-color:#6A6AFF;border-bottom-color:#6A6AFF"></div>
<div class="a" style="left:256px;top:311px;width:1px;height:42px;background:#3434FF"></div>
<div class="a" style="left:316px;top:311px;width:1px;height:42px;background:#3434FF"></div>
<div class="a" style="left:376px;top:311px;width:1px;height:42px;background:#3434FF"></div>
<div class="a" style="left:437px;top:311px;width:1px;height:42px;background:#3434FF"></div>
<div class="a" style="left:497px;top:311px;width:1px;height:42px;background:#3434FF"></div>
<div class="a" style="left:239px;top:354px;width:1px;height:59px;background:#3434FF"></div>
<div class="a" style="left:282px;top:354px;width:1px;height:59px;background:#3434FF"></div>
<div class="a" style="left:325px;top:354px;width:1px;height:59px;background:#3434FF"></div>
<div class="a" style="left:369px;top:354px;width:1px;height:59px;background:#3434FF"></div>
<div class="a" style="left:412px;top:354px;width:1px;height:59px;background:#3434FF"></div>
<div class="a" style="left:455px;top:354px;width:1px;height:59px;background:#3434FF"></div>
<div class="a" style="left:499px;top:354px;width:1px;height:59px;background:#3434FF"></div>
<div class="a" style="left:542px;top:354px;width:1px;height:59px;background:#3434FF"></div>
<div class="a" style="left:314px;top:415px;width:1px;height:167px;background:#3434FF"></div>
<div class="a" style="left:432px;top:415px;width:1px;height:167px;background:#3434FF"></div>
<div class="a" style="left:196px;top:498px;width:354px;height:1px;background:#3434FF"></div>
<div class="a" style="left:197px;top:311px;width:58px;height:42px;background:#7A48F2;border:1px solid #000;overflow:hidden"><div class="a" style="left:1px;top:1px;width:5px;height:38px;background:#000"></div><div class="a" style="left:11px;top:21.0px;width:0;height:0"><div style="position:absolute;left:-10px;top:-3px;width:20px;height:6px;font-size:5px;line-height:6px;text-align:center;transform:rotate(-90deg);color:#000;font-weight:bold">H</div></div><div class="a" style="left:29.5px;top:20.0px;width:0;height:0"><div style="position:absolute;left:-20px;top:-6px;width:40px;height:12px;font-size:2.8px;line-height:3.6px;padding-top:0.8px;text-align:center;transform:rotate(-90deg);color:#000;font-weight:bold">Seiten-ID: Front<br>Format: 148,5 x 105<br>Farben:</div></div><svg class="a" style="left:0;top:0" width="58" height="42"><rect x="48" y="18.8" width="8" height="2"/><path d="M48 18.8L48 20.8L50.2 23.6L51.6 22.6Z"/></svg></div>
<div class="a" style="left:257px;top:311px;width:59px;height:42px;background:#7A48F2;border:1px solid #000;overflow:hidden"><div class="a" style="left:1px;top:1px;width:5px;height:38px;background:#000"></div><div class="a" style="left:11px;top:21.0px;width:0;height:0"><div style="position:absolute;left:-10px;top:-3px;width:20px;height:6px;font-size:5px;line-height:6px;text-align:center;transform:rotate(-90deg);color:#000;font-weight:bold">H</div></div><div class="a" style="left:30.0px;top:20.0px;width:0;height:0"><div style="position:absolute;left:-20px;top:-6px;width:40px;height:12px;font-size:2.8px;line-height:3.6px;padding-top:0.8px;text-align:center;transform:rotate(-90deg);color:#000;font-weight:bold">Seiten-ID: Front<br>Format: 148,5 x 105<br>Farben:</div></div><svg class="a" style="left:0;top:0" width="59" height="42"><rect x="48" y="18.8" width="9" height="2"/><path d="M48 18.8L48 20.8L50.2 23.6L51.6 22.6Z"/></svg></div>
<div class="a" style="left:317px;top:311px;width:59px;height:42px;background:#7A48F2;border:1px solid #000;overflow:hidden"><div class="a" style="left:1px;top:1px;width:5px;height:38px;background:#000"></div><div class="a" style="left:11px;top:21.0px;width:0;height:0"><div style="position:absolute;left:-10px;top:-3px;width:20px;height:6px;font-size:5px;line-height:6px;text-align:center;transform:rotate(-90deg);color:#000;font-weight:bold">H</div></div><div class="a" style="left:30.0px;top:20.0px;width:0;height:0"><div style="position:absolute;left:-20px;top:-6px;width:40px;height:12px;font-size:2.8px;line-height:3.6px;padding-top:0.8px;text-align:center;transform:rotate(-90deg);color:#000;font-weight:bold">Seiten-ID: Front<br>Format: 148,5 x 105<br>Farben:</div></div><svg class="a" style="left:0;top:0" width="59" height="42"><rect x="48" y="18.8" width="9" height="2"/><path d="M48 18.8L48 20.8L50.2 23.6L51.6 22.6Z"/></svg></div>
<div class="a" style="left:377px;top:311px;width:59px;height:42px;background:#7A48F2;border:1px solid #000;overflow:hidden"><div class="a" style="left:1px;top:1px;width:5px;height:38px;background:#000"></div><div class="a" style="left:11px;top:21.0px;width:0;height:0"><div style="position:absolute;left:-10px;top:-3px;width:20px;height:6px;font-size:5px;line-height:6px;text-align:center;transform:rotate(-90deg);color:#000;font-weight:bold">H</div></div><div class="a" style="left:30.0px;top:20.0px;width:0;height:0"><div style="position:absolute;left:-20px;top:-6px;width:40px;height:12px;font-size:2.8px;line-height:3.6px;padding-top:0.8px;text-align:center;transform:rotate(-90deg);color:#000;font-weight:bold">Seiten-ID: Front<br>Format: 148,5 x 105<br>Farben:</div></div><svg class="a" style="left:0;top:0" width="59" height="42"><rect x="48" y="18.8" width="9" height="2"/><path d="M48 18.8L48 20.8L50.2 23.6L51.6 22.6Z"/></svg></div>
<div class="a" style="left:438px;top:311px;width:58px;height:42px;background:#4343F2;border:1px solid #000;overflow:hidden"><div class="a" style="left:1px;top:1px;width:5px;height:38px;background:#000"></div><div class="a" style="left:11px;top:21.0px;width:0;height:0"><div style="position:absolute;left:-10px;top:-3px;width:20px;height:6px;font-size:5px;line-height:6px;text-align:center;transform:rotate(-90deg);color:#000;font-weight:bold">I</div></div><div class="a" style="left:29.5px;top:20.0px;width:0;height:0"><div style="position:absolute;left:-20px;top:-6px;width:40px;height:12px;font-size:2.8px;line-height:3.6px;padding-top:0.8px;text-align:center;transform:rotate(-90deg);color:#000;font-weight:bold">Seiten-ID: Front<br>Format: 148,5 x 105<br>Farben:</div></div><svg class="a" style="left:0;top:0" width="58" height="42"><rect x="48" y="18.8" width="8" height="2"/><path d="M48 18.8L48 20.8L50.2 23.6L51.6 22.6Z"/></svg></div>
<div class="a" style="left:498px;top:311px;width:59px;height:42px;background:#4343F2;border:1px solid #000;overflow:hidden"><div class="a" style="left:1px;top:1px;width:5px;height:38px;background:#000"></div><div class="a" style="left:11px;top:21.0px;width:0;height:0"><div style="position:absolute;left:-10px;top:-3px;width:20px;height:6px;font-size:5px;line-height:6px;text-align:center;transform:rotate(-90deg);color:#000;font-weight:bold">I</div></div><div class="a" style="left:30.0px;top:20.0px;width:0;height:0"><div style="position:absolute;left:-20px;top:-6px;width:40px;height:12px;font-size:2.8px;line-height:3.6px;padding-top:0.8px;text-align:center;transform:rotate(-90deg);color:#000;font-weight:bold">Seiten-ID: Front<br>Format: 148,5 x 105<br>Farben:</div></div><svg class="a" style="left:0;top:0" width="59" height="42"><rect x="48" y="18.8" width="9" height="2"/><path d="M48 18.8L48 20.8L50.2 23.6L51.6 22.6Z"/></svg></div>
<div class="a" style="left:197px;top:354px;width:41px;height:59px;background:#D8D22E;border:1px solid #000;overflow:hidden"><div class="a" style="left:1px;top:1px;width:37px;height:6px;background:#000"></div><div class="a" style="left:0;top:8px;width:39px;height:6px;font-size:5px;line-height:6px;text-align:center;color:#000">A</div><div class="a" style="left:0;top:25px;width:39px;height:12px;font-size:3px;line-height:3.6px;text-align:center;color:#000;font-weight:bold">Seiten-ID: Front<br>Format: 105 x 148,5<br>Farben:</div><svg class="a" style="left:0;top:0" width="41" height="59"><rect x="18.9" y="49" width="2" height="8"/><path d="M18.9 49L20.9 49L16.5 52.8L15.6 51.8Z"/></svg></div>
<div class="a" style="left:240px;top:354px;width:42px;height:59px;background:#D69838;border:1px solid #000;overflow:hidden"><div class="a" style="left:1px;top:1px;width:38px;height:6px;background:#000"></div><div class="a" style="left:0;top:8px;width:40px;height:6px;font-size:5px;line-height:6px;text-align:center;color:#000">B</div><div class="a" style="left:0;top:25px;width:40px;height:12px;font-size:3px;line-height:3.6px;text-align:center;color:#000;font-weight:bold">Seiten-ID: Front<br>Format: 105 x 148,5<br>Farben:</div><svg class="a" style="left:0;top:0" width="42" height="59"><rect x="19.4" y="49" width="2" height="8"/><path d="M19.4 49L21.4 49L17.0 52.8L16.1 51.8Z"/></svg></div>
<div class="a" style="left:283px;top:354px;width:42px;height:59px;background:#D69838;border:1px solid #000;overflow:hidden"><div class="a" style="left:1px;top:1px;width:38px;height:6px;background:#000"></div><div class="a" style="left:0;top:8px;width:40px;height:6px;font-size:5px;line-height:6px;text-align:center;color:#000">B</div><div class="a" style="left:0;top:25px;width:40px;height:12px;font-size:3px;line-height:3.6px;text-align:center;color:#000;font-weight:bold">Seiten-ID: Front<br>Format: 105 x 148,5<br>Farben:</div><svg class="a" style="left:0;top:0" width="42" height="59"><rect x="19.4" y="49" width="2" height="8"/><path d="M19.4 49L21.4 49L17.0 52.8L16.1 51.8Z"/></svg></div>
<div class="a" style="left:326px;top:354px;width:42px;height:59px;background:#D40032;border:1px solid #000;overflow:hidden"><div class="a" style="left:1px;top:1px;width:38px;height:6px;background:#000"></div><div class="a" style="left:0;top:8px;width:40px;height:6px;font-size:5px;line-height:6px;text-align:center;color:#000">D</div><div class="a" style="left:0;top:25px;width:40px;height:12px;font-size:3px;line-height:3.6px;text-align:center;color:#000;font-weight:bold">Seiten-ID: Front<br>Format: 105 x 148,5<br>Farben:</div><svg class="a" style="left:0;top:0" width="42" height="59"><rect x="19.4" y="49" width="2" height="8"/><path d="M19.4 49L21.4 49L17.0 52.8L16.1 51.8Z"/></svg></div>
<div class="a" style="left:370px;top:354px;width:42px;height:59px;background:#D40032;border:1px solid #000;overflow:hidden"><div class="a" style="left:1px;top:1px;width:38px;height:6px;background:#000"></div><div class="a" style="left:0;top:8px;width:40px;height:6px;font-size:5px;line-height:6px;text-align:center;color:#000">D</div><div class="a" style="left:0;top:25px;width:40px;height:12px;font-size:3px;line-height:3.6px;text-align:center;color:#000;font-weight:bold">Seiten-ID: Front<br>Format: 105 x 148,5<br>Farben:</div><svg class="a" style="left:0;top:0" width="42" height="59"><rect x="19.4" y="49" width="2" height="8"/><path d="M19.4 49L21.4 49L17.0 52.8L16.1 51.8Z"/></svg></div>
<div class="a" style="left:413px;top:354px;width:42px;height:59px;background:#B02CF0;border:1px solid #000;overflow:hidden"><div class="a" style="left:1px;top:1px;width:38px;height:6px;background:#000"></div><div class="a" style="left:0;top:8px;width:40px;height:6px;font-size:5px;line-height:6px;text-align:center;color:#000">G</div><div class="a" style="left:0;top:25px;width:40px;height:12px;font-size:3px;line-height:3.6px;text-align:center;color:#000;font-weight:bold">Seiten-ID: Front<br>Format: 105 x 148,5<br>Farben:</div><svg class="a" style="left:0;top:0" width="42" height="59"><rect x="19.4" y="49" width="2" height="8"/><path d="M19.4 49L21.4 49L17.0 52.8L16.1 51.8Z"/></svg></div>
<div class="a" style="left:456px;top:354px;width:42px;height:59px;background:#B02CF0;border:1px solid #000;overflow:hidden"><div class="a" style="left:1px;top:1px;width:38px;height:6px;background:#000"></div><div class="a" style="left:0;top:8px;width:40px;height:6px;font-size:5px;line-height:6px;text-align:center;color:#000">G</div><div class="a" style="left:0;top:25px;width:40px;height:12px;font-size:3px;line-height:3.6px;text-align:center;color:#000;font-weight:bold">Seiten-ID: Front<br>Format: 105 x 148,5<br>Farben:</div><svg class="a" style="left:0;top:0" width="42" height="59"><rect x="19.4" y="49" width="2" height="8"/><path d="M19.4 49L21.4 49L17.0 52.8L16.1 51.8Z"/></svg></div>
<div class="a" style="left:500px;top:354px;width:42px;height:59px;background:#7A48F2;border:1px solid #000;overflow:hidden"><div class="a" style="left:1px;top:1px;width:38px;height:6px;background:#000"></div><div class="a" style="left:0;top:8px;width:40px;height:6px;font-size:5px;line-height:6px;text-align:center;color:#000">H</div><div class="a" style="left:0;top:25px;width:40px;height:12px;font-size:3px;line-height:3.6px;text-align:center;color:#000;font-weight:bold">Seiten-ID: Front<br>Format: 105 x 148,5<br>Farben:</div><svg class="a" style="left:0;top:0" width="42" height="59"><rect x="19.4" y="49" width="2" height="8"/><path d="M19.4 49L21.4 49L17.0 52.8L16.1 51.8Z"/></svg></div>
<div class="a" style="left:543px;top:354px;width:42px;height:59px;background:#7A48F2;border:1px solid #000;overflow:hidden"><div class="a" style="left:1px;top:1px;width:38px;height:6px;background:#000"></div><div class="a" style="left:0;top:8px;width:40px;height:6px;font-size:5px;line-height:6px;text-align:center;color:#000">H</div><div class="a" style="left:0;top:25px;width:40px;height:12px;font-size:3px;line-height:3.6px;text-align:center;color:#000;font-weight:bold">Seiten-ID: Front<br>Format: 105 x 148,5<br>Farben:</div><svg class="a" style="left:0;top:0" width="42" height="59"><rect x="19.4" y="49" width="2" height="8"/><path d="M19.4 49L21.4 49L17.0 52.8L16.1 51.8Z"/></svg></div>
<div class="a" style="left:197px;top:415px;width:116px;height:83px;background:#00C8B4;border:1px solid #000;overflow:hidden"><div class="a" style="left:3px;top:3px;width:9px;height:73px;background:#000"></div><div class="a" style="left:22px;top:39.0px;width:0;height:0"><div style="position:absolute;left:-10px;top:-5px;width:20px;height:10px;font-size:10px;line-height:10px;text-align:center;transform:rotate(-90deg)">M</div></div><div class="a" style="left:59.0px;top:40.5px;width:0;height:0"><div style="position:absolute;left:-30px;top:-11px;width:60px;height:22px;font-size:5.4px;line-height:6.8px;padding-top:0.8px;text-align:center;transform:rotate(-90deg);color:#111">Seiten-ID: Front<br>Format: 210 x 297<br>Farben:</div></div><svg class="a" style="left:0;top:0" width="116" height="83"><rect x="96" y="37" width="16" height="3"/><path d="M96 37L96 40.5L101.5 44.2L103.6 43L99 39Z"/></svg></div>
<div class="a" style="left:315px;top:415px;width:117px;height:83px;background:#00C8B4;border:1px solid #000;overflow:hidden"><div class="a" style="left:3px;top:3px;width:9px;height:73px;background:#000"></div><div class="a" style="left:22px;top:39.0px;width:0;height:0"><div style="position:absolute;left:-10px;top:-5px;width:20px;height:10px;font-size:10px;line-height:10px;text-align:center;transform:rotate(-90deg)">M</div></div><div class="a" style="left:59.5px;top:40.5px;width:0;height:0"><div style="position:absolute;left:-30px;top:-11px;width:60px;height:22px;font-size:5.4px;line-height:6.8px;padding-top:0.8px;text-align:center;transform:rotate(-90deg);color:#111">Seiten-ID: Front<br>Format: 210 x 297<br>Farben:</div></div><svg class="a" style="left:0;top:0" width="117" height="83"><rect x="96" y="37" width="16" height="3"/><path d="M96 37L96 40.5L101.5 44.2L103.6 43L99 39Z"/></svg></div>
<div class="a" style="left:433px;top:415px;width:117px;height:83px;background:#10A862;border:1px solid #000;overflow:hidden"><div class="a" style="left:3px;top:3px;width:9px;height:73px;background:#000"></div><div class="a" style="left:22px;top:39.0px;width:0;height:0"><div style="position:absolute;left:-10px;top:-5px;width:20px;height:10px;font-size:10px;line-height:10px;text-align:center;transform:rotate(-90deg)">N</div></div><div class="a" style="left:59.5px;top:40.5px;width:0;height:0"><div style="position:absolute;left:-30px;top:-11px;width:60px;height:22px;font-size:5.4px;line-height:6.8px;padding-top:0.8px;text-align:center;transform:rotate(-90deg);color:#111">Seiten-ID: Front<br>Format: 210 x 297<br>Farben:</div></div><svg class="a" style="left:0;top:0" width="117" height="83"><rect x="96" y="37" width="16" height="3"/><path d="M96 37L96 40.5L101.5 44.2L103.6 43L99 39Z"/></svg></div>
<div class="a" style="left:197px;top:499px;width:116px;height:83px;background:#3A80F8;border:1px solid #000;overflow:hidden"><div class="a" style="left:3px;top:3px;width:9px;height:73px;background:#000"></div><div class="a" style="left:22px;top:39.0px;width:0;height:0"><div style="position:absolute;left:-10px;top:-5px;width:20px;height:10px;font-size:10px;line-height:10px;text-align:center;transform:rotate(-90deg)">J</div></div><div class="a" style="left:59.0px;top:40.5px;width:0;height:0"><div style="position:absolute;left:-30px;top:-11px;width:60px;height:22px;font-size:5.4px;line-height:6.8px;padding-top:0.8px;text-align:center;transform:rotate(-90deg);color:#111">Seiten-ID: Front<br>Format: 210 x 297<br>Farben:</div></div><svg class="a" style="left:0;top:0" width="116" height="83"><rect x="96" y="37" width="16" height="3"/><path d="M96 37L96 40.5L101.5 44.2L103.6 43L99 39Z"/></svg></div>
<div class="a" style="left:315px;top:499px;width:117px;height:83px;background:#3A80F8;border:1px solid #000;overflow:hidden"><div class="a" style="left:3px;top:3px;width:9px;height:73px;background:#000"></div><div class="a" style="left:22px;top:39.0px;width:0;height:0"><div style="position:absolute;left:-10px;top:-5px;width:20px;height:10px;font-size:10px;line-height:10px;text-align:center;transform:rotate(-90deg)">J</div></div><div class="a" style="left:59.5px;top:40.5px;width:0;height:0"><div style="position:absolute;left:-30px;top:-11px;width:60px;height:22px;font-size:5.4px;line-height:6.8px;padding-top:0.8px;text-align:center;transform:rotate(-90deg);color:#111">Seiten-ID: Front<br>Format: 210 x 297<br>Farben:</div></div><svg class="a" style="left:0;top:0" width="117" height="83"><rect x="96" y="37" width="16" height="3"/><path d="M96 37L96 40.5L101.5 44.2L103.6 43L99 39Z"/></svg></div>
<div class="a" style="left:433px;top:499px;width:117px;height:83px;background:#00AAFF;border:1px solid #000;overflow:hidden"><div class="a" style="left:3px;top:3px;width:9px;height:73px;background:#000"></div><div class="a" style="left:22px;top:39.0px;width:0;height:0"><div style="position:absolute;left:-10px;top:-5px;width:20px;height:10px;font-size:10px;line-height:10px;text-align:center;transform:rotate(-90deg)">K</div></div><div class="a" style="left:59.5px;top:40.5px;width:0;height:0"><div style="position:absolute;left:-30px;top:-11px;width:60px;height:22px;font-size:5.4px;line-height:6.8px;padding-top:0.8px;text-align:center;transform:rotate(-90deg);color:#111">Seiten-ID: Front<br>Format: 210 x 297<br>Farben:</div></div><svg class="a" style="left:0;top:0" width="117" height="83"><rect x="96" y="37" width="16" height="3"/><path d="M96 37L96 40.5L101.5 44.2L103.6 43L99 39Z"/></svg></div>
</body></html>
